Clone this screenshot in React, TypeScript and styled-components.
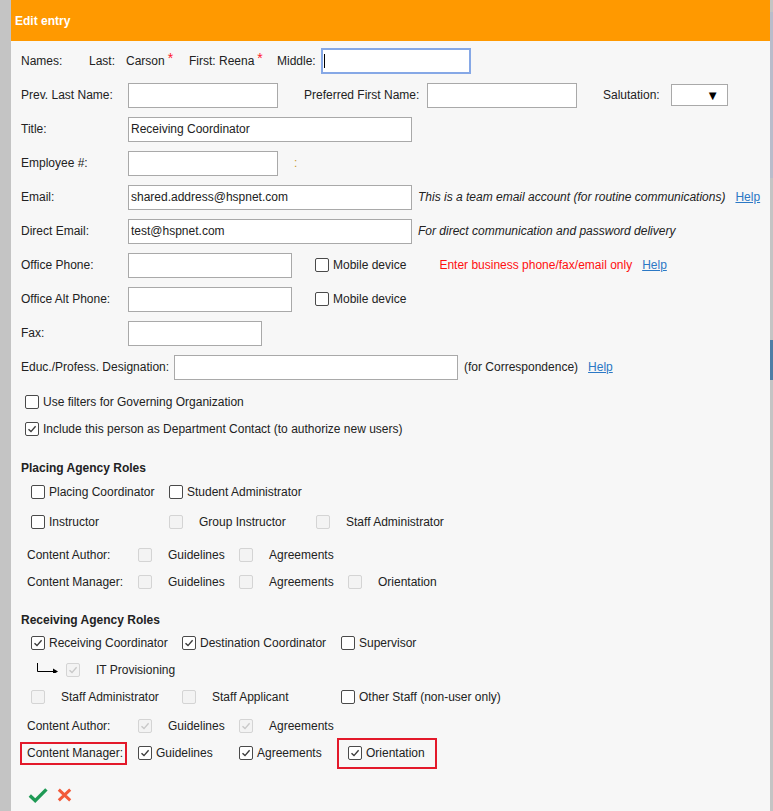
import React from 'react'
import styled, { createGlobalStyle } from 'styled-components'

const GlobalStyle = createGlobalStyle`
  html, body {
    margin: 0;
    padding: 0;
    background: #c4c4c4;
    overflow: hidden;
  }
  body {
    font-family: "Liberation Sans", Arial, sans-serif;
    font-size: 12px;
    color: #222;
  }
`

const Page = styled.div`
  display: flex;
  height: 811px;
`

const LeftStrip = styled.div`
  width: 11px;
  flex: none;
  background: #c4c4c4;
`

const RightStrip = styled.div`
  width: 3px;
  flex: none;
  background: linear-gradient(
    to bottom,
    #c4c4c4 0,
    #c4c4c4 12px,
    #b9bccb 12px,
    #b9bccb 178px,
    #c4c4c4 178px,
    #c4c4c4 340px,
    #4e7ea6 340px,
    #4e7ea6 380px,
    #c4c4c4 380px
  );
`

const Dialog = styled.div`
  width: 759px;
  flex: none;
  background: #f7f7f7;
  display: flex;
  flex-direction: column;
`

const Header = styled.div`
  height: 41px;
  background: #ff9900;
  color: #fff;
  font-weight: bold;
  display: flex;
  align-items: center;
  padding-left: 4px;
`

const Body = styled.div`
  padding: 3px 0 0 10px;
`

const Row = styled.div<{ $h?: number; $pl?: number; $mt?: number }>`
  display: flex;
  align-items: center;
  height: ${p => p.$h ?? 34}px;
  padding-left: ${p => p.$pl ?? 0}px;
  margin-top: ${p => p.$mt ?? 0}px;
  white-space: nowrap;
`

const Cell = styled.div<{ $w?: number; $ml?: number }>`
  display: flex;
  align-items: center;
  flex: none;
  width: ${p => (p.$w ? `${p.$w}px` : 'auto')};
  margin-left: ${p => p.$ml ?? 0}px;
`

const Input = styled.div<{ $w: number; $h?: number }>`
  box-sizing: border-box;
  width: ${p => p.$w}px;
  height: ${p => p.$h ?? 25}px;
  border: 1px solid #a9a9a9;
  background: #fff;
  display: flex;
  align-items: center;
  padding-left: 2px;
  flex: none;
`

const FocusedInput = styled(Input)`
  border: 2px solid #86a8e6;
  padding-left: 1px;
`

const Caret = styled.span`
  width: 1px;
  height: 14px;
  background: #000;
`

const Select = styled.div`
  box-sizing: border-box;
  width: 57px;
  height: 22px;
  border: 1px solid #a9a9a9;
  background: #fff;
  display: flex;
  align-items: center;
  justify-content: flex-end;
  padding-right: 8px;
  font-size: 13px;
  color: #000;
`

const Req = styled.span`
  color: #ff1a2e;
  font-size: 14px;
  align-self: flex-start;
  margin: -3px 0 0 3px;
  line-height: 14px;
`

const Note = styled.span<{ $italic?: boolean }>`
  font-style: ${p => (p.$italic === false ? 'normal' : 'italic')};
  margin-left: 6px;
`

const Warn = styled.span<{ $ml?: number }>`
  color: #ff1010;
  margin-left: ${p => p.$ml ?? 0}px;
`

const Help = styled.a<{ $ml?: number }>`
  color: #2b78c5;
  text-decoration: underline;
  margin-left: ${p => p.$ml ?? 10}px;
`

const Colon = styled.span`
  color: #c99a2e;
  margin-left: 16px;
`

const Heading = styled.div<{ $mt: number }>`
  font-weight: bold;
  height: 20px;
  display: flex;
  align-items: center;
  margin-top: ${p => p.$mt}px;
`

const Box = styled.span<{ $disabled?: boolean }>`
  box-sizing: border-box;
  width: 14px;
  height: 14px;
  flex: none;
  border-radius: 2px;
  border: 1px solid ${p => (p.$disabled ? '#d4d4d4' : '#4a4a4a')};
  background: ${p => (p.$disabled ? '#f3f3f3' : '#fff')};
  display: flex;
  align-items: center;
  justify-content: center;
`

const CheckLabel = styled.span<{ $gap: number }>`
  margin-left: ${p => p.$gap}px;
`

const Marked = styled.div<{ $w: number; $h: number; $pl: number; $ml?: number }>`
  box-sizing: border-box;
  width: ${p => p.$w}px;
  height: ${p => p.$h}px;
  border: 2px solid #e3192a;
  display: flex;
  align-items: center;
  flex: none;
  padding-left: ${p => p.$pl}px;
  margin-left: ${p => p.$ml ?? 0}px;
`

const Actions = styled.div`
  display: flex;
  align-items: center;
  gap: 9px;
  margin-top: 23px;
  padding-left: 7px;
`

type CheckProps = { checked?: boolean; disabled?: boolean; label?: string; gap?: number }

const Check = ({ checked, disabled, label, gap }: CheckProps) => (
  <>
    <Box $disabled={disabled}>
      {checked && (
        <svg width="10" height="10" viewBox="0 0 10 10">
          <path
            d="M1.5 5.2 L4 7.6 L8.6 2.3"
            fill="none"
            stroke={disabled ? '#c8c8c8' : '#3a3a3a'}
            strokeWidth="1.4"
          />
        </svg>
      )}
    </Box>
    {label && <CheckLabel $gap={gap ?? (disabled ? 16 : 4)}>{label}</CheckLabel>}
  </>
)

const SubArrow = () => (
  <svg width="22" height="10" viewBox="0 0 22 10" style={{ marginTop: -4 }}>
    <path d="M0.5 0 V8.5 H17" fill="none" stroke="#000" strokeWidth="1" />
    <path d="M16 5.5 L21 8.5 L16 11.5 Z" fill="#000" />
  </svg>
)

export default function App() {
  return (
    <>
      <GlobalStyle />
      <Page>
        <LeftStrip />
        <Dialog>
          <Header>Edit entry</Header>
          <Body>
            <Row>
              <Cell $w={68}>Names:</Cell>
              <Cell $w={37}>Last:</Cell>
              <Cell $w={63}>
                Carson<Req>*</Req>
              </Cell>
              <Cell $w={88}>
                First: Reena<Req>*</Req>
              </Cell>
              <Cell $w={44}>Middle:</Cell>
              <FocusedInput $w={150} $h={26}>
                <Caret />
              </FocusedInput>
            </Row>
            <Row>
              <Cell $w={107}>Prev. Last Name:</Cell>
              <Input $w={150} />
              <Cell $w={123} $ml={26}>Preferred First Name:</Cell>
              <Input $w={150} />
              <Cell $w={68} $ml={26}>Salutation:</Cell>
              <Select>▼</Select>
            </Row>
            <Row>
              <Cell $w={107}>Title:</Cell>
              <Input $w={284}>Receiving Coordinator</Input>
            </Row>
            <Row>
              <Cell $w={107}>Employee #:</Cell>
              <Input $w={150} />
              <Colon>:</Colon>
            </Row>
            <Row>
              <Cell $w={107}>Email:</Cell>
              <Input $w={284}>shared.address@hspnet.com</Input>
              <Note>This is a team email account (for routine communications)</Note>
              <Help href="#">Help</Help>
            </Row>
            <Row>
              <Cell $w={107}>Direct Email:</Cell>
              <Input $w={284}>test@hspnet.com</Input>
              <Note>For direct communication and password delivery</Note>
            </Row>
            <Row>
              <Cell $w={107}>Office Phone:</Cell>
              <Input $w={164} />
              <Cell $ml={23}>
                <Check label="Mobile device" />
              </Cell>
              <Warn $ml={33}>Enter business phone/fax/email only</Warn>
              <Help href="#">Help</Help>
            </Row>
            <Row>
              <Cell $w={107}>Office Alt Phone:</Cell>
              <Input $w={164} />
              <Cell $ml={23}>
                <Check label="Mobile device" />
              </Cell>
            </Row>
            <Row>
              <Cell $w={107}>Fax:</Cell>
              <Input $w={134} />
            </Row>
            <Row>
              <Cell $w={153}>Educ./Profess. Designation:</Cell>
              <Input $w={284} />
              <Note $italic={false}>(for Correspondence)</Note>
              <Help href="#">Help</Help>
            </Row>

            <Row $h={27} $pl={4} $mt={4}>
              <Check label="Use filters for Governing Organization" />
            </Row>
            <Row $h={27} $pl={4}>
              <Check checked label="Include this person as Department Contact (to authorize new users)" />
            </Row>

            <Heading $mt={16}>Placing Agency Roles</Heading>
            <Row $h={27} $pl={10}>
              <Cell $w={138}>
                <Check label="Placing Coordinator" />
              </Cell>
              <Cell>
                <Check label="Student Administrator" />
              </Cell>
            </Row>
            <Row $h={34} $pl={10}>
              <Cell $w={138}>
                <Check label="Instructor" />
              </Cell>
              <Cell $w={147}>
                <Check disabled label="Group Instructor" />
              </Cell>
              <Cell>
                <Check disabled label="Staff Administrator" />
              </Cell>
            </Row>
            <Row $h={32} $pl={6}>
              <Cell $w={111}>Content Author:</Cell>
              <Cell $w={101}>
                <Check disabled label="Guidelines" />
              </Cell>
              <Cell>
                <Check disabled label="Agreements" />
              </Cell>
            </Row>
            <Row $h={22} $pl={6}>
              <Cell $w={111}>Content Manager:</Cell>
              <Cell $w={101}>
                <Check disabled label="Guidelines" />
              </Cell>
              <Cell $w={109}>
                <Check disabled label="Agreements" />
              </Cell>
              <Cell>
                <Check disabled label="Orientation" />
              </Cell>
            </Row>

            <Heading $mt={17}>Receiving Agency Roles</Heading>
            <Row $h={26} $pl={10}>
              <Cell $w={151}>
                <Check checked label="Receiving Coordinator" />
              </Cell>
              <Cell $w={159}>
                <Check checked label="Destination Coordinator" />
              </Cell>
              <Cell>
                <Check label="Supervisor" />
              </Cell>
            </Row>
            <Row $h={28} $pl={16}>
              <SubArrow />
              <Cell $ml={7}>
                <Check checked disabled label="IT Provisioning" />
              </Cell>
            </Row>
            <Row $h={26} $pl={10}>
              <Cell $w={151}>
                <Check disabled label="Staff Administrator" />
              </Cell>
              <Cell $w={159}>
                <Check disabled label="Staff Applicant" />
              </Cell>
              <Cell>
                <Check label="Other Staff (non-user only)" />
              </Cell>
            </Row>
            <Row $h={32} $pl={6}>
              <Cell $w={111}>Content Author:</Cell>
              <Cell $w={101}>
                <Check checked disabled label="Guidelines" />
              </Cell>
              <Cell>
                <Check checked disabled label="Agreements" />
              </Cell>
            </Row>
            <Row $h={22}>
              <Marked $w={107} $h={23} $pl={5} $ml={-1}>
                Content Manager:
              </Marked>
              <Cell $w={101} $ml={11}>
                <Check checked label="Guidelines" />
              </Cell>
              <Cell $w={98}>
                <Check checked label="Agreements" />
              </Cell>
              <Marked $w={100} $h={31} $pl={9}>
                <Check checked label="Orientation" />
              </Marked>
            </Row>

            <Actions>
              <svg width="20" height="16" viewBox="0 0 20 16">
                <path d="M1.8 8.6 L7.2 13.6 L18.4 2.4" fill="none" stroke="#1f9a55" strokeWidth="3.4" />
              </svg>
              <svg width="15" height="14" viewBox="0 0 15 14">
                <path d="M1.8 1.6 L13.2 12.4 M13.2 1.6 L1.8 12.4" fill="none" stroke="#f25a3a" strokeWidth="3" />
              </svg>
            </Actions>
          </Body>
        </Dialog>
        <RightStrip />
      </Page>
    </>
  )
}
